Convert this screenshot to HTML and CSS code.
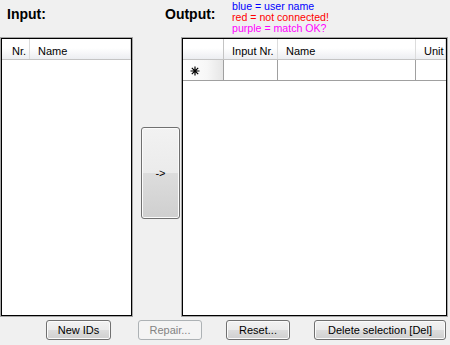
FILE: index.html
```html
<!DOCTYPE html>
<html>
<head>
<meta charset="utf-8">
<link rel="stylesheet" href="styles.css">
</head>
<body>
<div class="app">
  <div class="top">
    <div class="lbl lbl-in">Input:</div>
    <div class="lbl lbl-out">Output:</div>
    <div class="legend">
      <div class="lg-blue">blue = user name</div>
      <div class="lg-red">red = not connected!</div>
      <div class="lg-purple">purple = match OK?</div>
    </div>
  </div>
  <div class="main">
    <div class="panel panel-in">
      <div class="hdr">
        <div class="hc hc-nr">Nr.</div>
        <div class="hc hc-last">Name</div>
      </div>
    </div>
    <div class="mid">
      <button class="btn btn-arrow">-&gt;</button>
    </div>
    <div class="panel panel-out">
      <div class="hdr">
        <div class="hc hc-corner"></div>
        <div class="hc hc-input">Input Nr.</div>
        <div class="hc hc-name">Name</div>
        <div class="hc hc-last">Unit</div>
      </div>
      <div class="row">
        <div class="rowhead">
          <svg class="star" width="10" height="10" viewBox="0 0 10 10">
            <path d="M5 0.5V9.5M0.5 5H9.5M1.8 1.8L8.2 8.2M8.2 1.8L1.8 8.2" stroke="#000" stroke-width="1.2" fill="none"/>
          </svg>
        </div>
        <div class="cell cell-input"></div>
        <div class="cell cell-name"></div>
        <div class="cell cell-last"></div>
      </div>
    </div>
  </div>
  <div class="bottom">
    <button class="btn btn-new">New IDs</button>
    <button class="btn btn-repair" disabled>Repair...</button>
    <button class="btn btn-reset">Reset...</button>
    <button class="btn btn-delete">Delete selection [Del]</button>
  </div>
</div>
</body>
</html>
```
FILE: styles.css
```css
* { box-sizing: border-box; }
html, body {
  margin: 0;
  padding: 0;
  background: #f0f0f0;
  font-family: "Liberation Sans", Arial, sans-serif;
  font-size: 11px;
  color: #000;
}
.app {
  width: 450px;
  height: 345px;
  overflow: hidden;
}
.top {
  display: flex;
  height: 38px;
}
.lbl {
  font-size: 14px;
  font-weight: bold;
  line-height: 16px;
  padding-top: 6px;
}
.lbl-in {
  width: 165px;
  padding-left: 7px;
}
.lbl-out {
  width: 67px;
}
.legend {
  padding-top: 1px;
  font-size: 10.6px;
  line-height: 11px;
}
.lg-blue { color: #0000ff; }
.lg-red { color: #ff0000; }
.lg-purple { color: #ff00ff; }

.main {
  display: flex;
  height: 278px;
}
.panel {
  background: #fff;
  border: 1px solid #000;
  box-shadow: 0 0 0 1px rgba(0, 0, 0, 0.3);
  height: 278px;
}
.panel-in {
  margin-left: 1px;
  width: 131px;
}
.panel-out {
  width: 265px;
}
.mid {
  width: 50px;
}
.hdr {
  display: flex;
  height: 21px;
  background: linear-gradient(#ffffff 0%, #ffffff 45%, #f3f4f6 80%, #eceef1 100%);
  border-bottom: 1px solid #c4c4c4;
}
.hc {
  height: 20px;
  line-height: 20px;
  padding-top: 2px;
  padding-left: 8px;
  border-right: 1px solid #dcdcdc;
  white-space: nowrap;
  overflow: hidden;
}
.hc-nr { width: 28px; padding-left: 10px; }
.hc-corner { width: 41px; border-right-color: #c4c4c4; }
.hc-input { width: 54px; }
.hc-name { width: 138px; }
.hc-last { flex: 1; }

.row {
  display: flex;
  height: 21px;
  border-bottom: 1px solid #a0a0a0;
}
.rowhead {
  width: 41px;
  height: 20px;
  border-right: 1px solid #a0a0a0;
  background: linear-gradient(to right, #ffffff 0%, #f7f7f7 60%, #e6e6e6 100%);
  display: flex;
  align-items: center;
  padding-left: 7px;
  padding-top: 2px;
}
.star { display: block; }
.cell {
  height: 20px;
  border-right: 1px solid #a0a0a0;
}
.cell-input { width: 54px; }
.cell-name { width: 138px; }
.cell-last { flex: 1; border-right: none; }

.btn {
  font-family: "Liberation Sans", Arial, sans-serif;
  font-size: 11px;
  color: #000;
  padding: 0;
  border: 1px solid #707070;
  border-radius: 3px;
  background: linear-gradient(#f2f2f2 0%, #ebebeb 50%, #dddddd 50%, #cfcfcf 100%);
  box-shadow: inset 0 0 0 1px #fbfbfb;
  text-align: center;
}
.btn-arrow {
  margin-left: 9px;
  margin-top: 89px;
  width: 39px;
  height: 92px;
}
.bottom {
  display: flex;
  padding-top: 4px;
}
.bottom .btn {
  height: 20px;
  line-height: 16px;
}
.btn-new { margin-left: 46px; width: 65px; }
.btn-repair {
  margin-left: 27px;
  width: 64px;
  color: #838383;
  border-color: #adb2b5;
  background: #f4f4f4;
  box-shadow: none;
}
.btn-reset { margin-left: 24px; width: 64px; }
.btn-delete { margin-left: 24px; width: 132px; }
```
